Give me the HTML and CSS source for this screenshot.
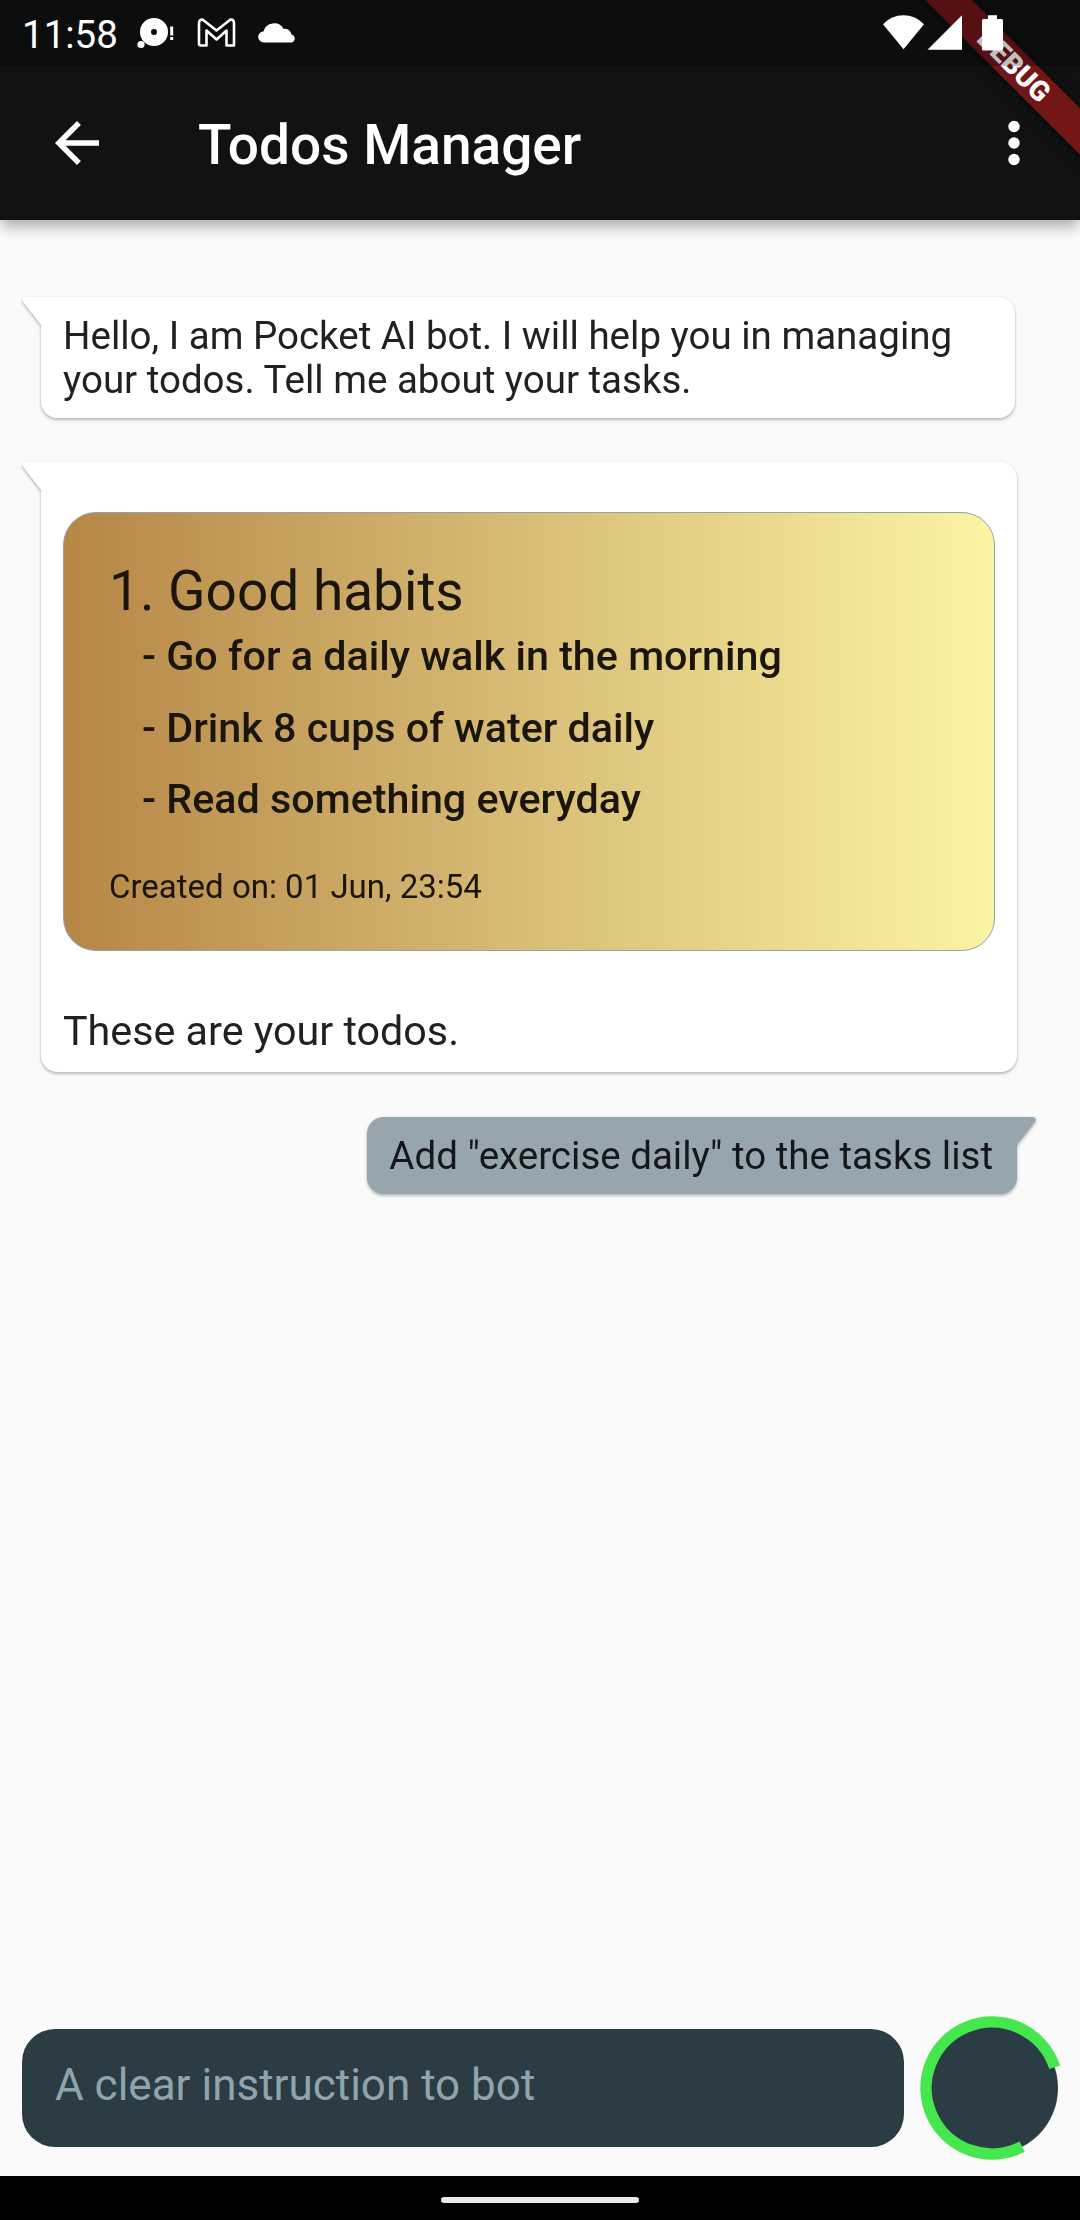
FILE: index.html
```html
<!DOCTYPE html>
<html lang="en">
<head>
<meta charset="utf-8">
<title>Todos Manager</title>
<link rel="stylesheet" href="styles.css">
</head>
<body>
<div class="screen">
  <header class="top">
    <div class="status">
      <span class="clock">11:58</span>
      <svg class="notifications" width="165" height="66" viewBox="135 0 165 66" fill="#fff">
        <path fill-rule="evenodd" d="M154 18a14 14 0 1 1 0 28a14 14 0 1 1 0-28zM154 29a3 3 0 1 0 0 6a3 3 0 1 0 0-6z"/>
        <circle cx="141" cy="44.5" r="3.6"/>
        <path d="M170.200 26.500h3v9h-3zM170.200 37h3v3h-3z"/>
        <path fill="none" stroke="#fff" stroke-width="2.6" stroke-linejoin="round" d="M199 23.500Q199 19.300 202.500 19.500L216.500 30.500L230.500 19.500Q234 19.300 234 23.500V45.500H226.500V30.500L216.500 39.500L206.500 30.500V45.500H201Q199 45.500 199 43.500Z"/>
        <path d="M264 42.500a5.500 5.500 0 0 1-.6-11A11 11 0 0 1 283.500 28.800A7 7 0 0 1 291.500 34.500A4.200 4.200 0 0 1 292 42.500Z"/>
      </svg>
      <svg class="signals" width="130" height="66" viewBox="880 0 130 66" fill="#fff">
        <path d="M883 24.300Q891.500 15.300 903.500 15.300T924 24.300L903.500 49.300Z"/>
        <path d="M927.500 49.700L962 15.300V49.700Z"/>
        <path d="M988 15.300h9v3.700h4.500q1.500 0 1.500 1.500v28.500q0 1.500-1.500 1.500h-18q-1.500 0-1.500-1.500V20.500q0-1.500 1.500-1.500h4.500z"/>
      </svg>
    </div>
    <div class="appbar">
      <svg class="icon" viewBox="0 0 24 24"><path d="M20 11H7.830l5.590-5.590L12 4l-8 8 8 8 1.410-1.410L7.830 13H20v-2z"/></svg>
      <h1 class="title">Todos Manager</h1>
      <svg class="icon" viewBox="0 0 24 24"><circle cx="12" cy="6" r="2.080"/><circle cx="12" cy="12" r="2.080"/><circle cx="12" cy="18" r="2.080"/></svg>
    </div>
    <div class="banner"><span class="banner-label">DEBUG</span></div>
  </header>

  <main class="chat">
    <section class="bubble bot intro">
      <svg class="tail" width="20" height="28" viewBox="0 0 20 28"><path d="M20 0H2.500Q-1 1 .800 4.500L19 28H20Z"/></svg>
      <p class="message">Hello, I am Pocket AI bot. I will help you in managing your todos. Tell me about your tasks.</p>
    </section>

    <section class="bubble bot todos">
      <svg class="tail" width="20" height="28" viewBox="0 0 20 28"><path d="M20 0H2.500Q-1 1 .800 4.500L19 28H20Z"/></svg>
      <article class="card">
        <h2 class="card-title">1. Good habits</h2>
        <ul class="tasks">
          <li>- Go for a daily walk in the morning</li>
          <li>- Drink 8 cups of water daily</li>
          <li>- Read something everyday</li>
        </ul>
        <p class="created">Created on: 01 Jun, 23:54</p>
      </article>
      <p class="caption">These are your todos.</p>
    </section>

    <section class="bubble user">
      <svg class="tail" width="20" height="28" viewBox="0 0 20 28"><path d="M0 0H17.500Q21 1 19.200 4.500L1 28H0Z"/></svg>
      <p class="message">Add "exercise daily" to the tasks list</p>
    </section>
  </main>

  <footer class="composer">
    <div class="field">A clear instruction to bot</div>
    <svg class="progress" width="144" height="144" viewBox="-72 -72 144 144">
      <circle r="66" fill="#2b3c44"/>
      <path d="M30.200 58.700A66 66 0 1 1 62.700 -20.700" fill="none" stroke="#46e64f" stroke-width="11.500"/>
    </svg>
  </footer>
  <nav class="navbar"><span class="handle"></span></nav>
</div>
</body>
</html>
```
FILE: styles.css
```css
* { box-sizing: border-box; margin: 0; padding: 0; }
body { font-family: Roboto, sans-serif; color: #212121; background: #fafafa; }
.screen { width: 1080px; height: 2220px; display: flex; flex-direction: column; overflow: hidden; }

.top { position: relative; z-index: 1; height: 220px; background: #101312; box-shadow: 0 9px 14px -2px rgba(0,0,0,.26), 0 3px 12px rgba(0,0,0,.1); }
.status { position: relative; z-index: 2; height: 66px; padding: 0 70px 0 22px; display: flex; align-items: center; background: rgba(0,0,0,.25); }
.clock { width: 113px; color: #fff; font-size: 38.5px; line-height: 66px; padding-top: 3px; }
.signals { margin-left: auto; }
.appbar { height: 154px; padding: 0 33px 0 44px; display: flex; align-items: center; }
.icon { width: 66px; height: 66px; fill: #fff; }
.title { flex: 1; margin-left: 88px; color: #fff; font-size: 55px; font-weight: 500; line-height: 64px; padding-top: 3px; }

/* Corner ribbon, running diagonally under the status bar tint */
.banner { position: absolute; z-index: 1; left: 1014.200px; top: 65.800px; width: 300px; height: 33px; margin: -16.500px 0 0 -150px; transform: rotate(45deg); background: #741617; box-shadow: 0 0 16px rgba(0,0,0,.5); text-align: center; }
.banner-label { display: block; color: #fff; font-size: 28px; font-weight: 900; line-height: 34px; }

.chat { flex: 1; padding: 77px 63px 0 41px; display: flex; flex-direction: column; align-items: flex-start; }
.bubble { position: relative; border-radius: 16.500px; filter: drop-shadow(0 2.500px 1.500px rgba(0,0,0,.24)) drop-shadow(0 0 1px rgba(0,0,0,.08)); }
.bot { background: #fff; border-top-left-radius: 0; }
.intro { width: 974px; padding: 17px 22px 16px; margin-bottom: 44px; }
.todos { width: 976px; height: 610px; padding: 50px 22px 0; margin-bottom: 45px; }
.user { align-self: flex-end; height: 77px; padding: 17px 24px 16px 22px; background: #97a6ae; color: #14181a; border-top-right-radius: 0; }
.tail { position: absolute; top: 0; fill: #fff; }
.bot .tail { left: -19px; }
.user .tail { right: -19px; fill: #97a6ae; }
.message { font-size: 38.500px; line-height: 44px; }

.card { height: 439px; padding: 46px 45px; border: 1.500px solid #90a4ae; border-radius: 33px; background: linear-gradient(90deg, #b68647, #fbf4a4); color: #1a160d; }
.card-title { font-size: 55px; font-weight: 400; line-height: 64px; }
.tasks { list-style: none; padding: 1px 0 0 33px; }
.tasks li { font-size: 41.250px; font-weight: 500; height: 71.500px; line-height: 64px; }
.created { font-size: 33px; line-height: 38px; margin-top: 29px; }
.caption { font-size: 41.250px; line-height: 48px; margin-top: 56px; }

.composer { display: flex; align-items: center; padding: 0 16px 16px 22px; height: 160px; }
.field { width: 882px; height: 118px; padding-left: 33px; border-radius: 33px; background: #2b3c44; color: #90a4ae; font-size: 44px; line-height: 112px; }
.progress { margin-left: 16px; }
.navbar { height: 44px; background: #000; display: flex; justify-content: center; padding-top: 21px; }
.handle { width: 198px; height: 6px; border-radius: 3px; background: #ece9ec; }
```
